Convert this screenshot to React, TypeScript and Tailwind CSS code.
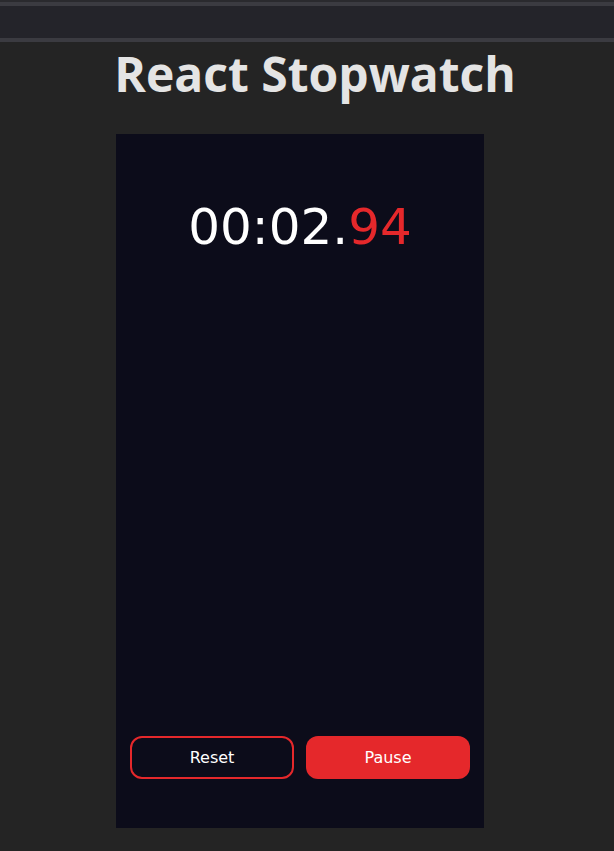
export default function App() {
  return (
    <div className="min-h-[851px] bg-[#242424] font-['Open_Sans',sans-serif]">
      <div className="h-[2px] bg-[#2a2a2e]" />
      <div className="h-[4px] bg-[#3b3b41]" />
      <div className="h-[32px] bg-[#24242a]" />
      <div className="h-[4px] bg-[#3b3b41]" />
      <div className="flex flex-col">
        <h1 className="pl-[16px] text-center text-[48px] font-bold leading-[64px] text-[#e4e4e4]">React Stopwatch</h1>
        <div className="ml-[116px] mt-[28px] flex h-[694px] w-[368px] flex-col bg-[#0c0c1a] px-[14px] pb-[49px]">
          <div className="mt-[58px] text-center font-['DejaVu_Sans',sans-serif] text-[50px] leading-[70px] text-white">
            00:02.<span className="text-[#e5282b]">94</span>
          </div>
          <div className="mt-auto flex justify-between font-['DejaVu_Sans',sans-serif] text-[16px]">
            <button className="h-[43px] w-[164px] rounded-[12px] border-2 border-[#e5282b] text-white">Reset</button>
            <button className="h-[43px] w-[164px] rounded-[12px] bg-[#e5282b] text-white">Pause</button>
          </div>
        </div>
      </div>
    </div>
  );
}
